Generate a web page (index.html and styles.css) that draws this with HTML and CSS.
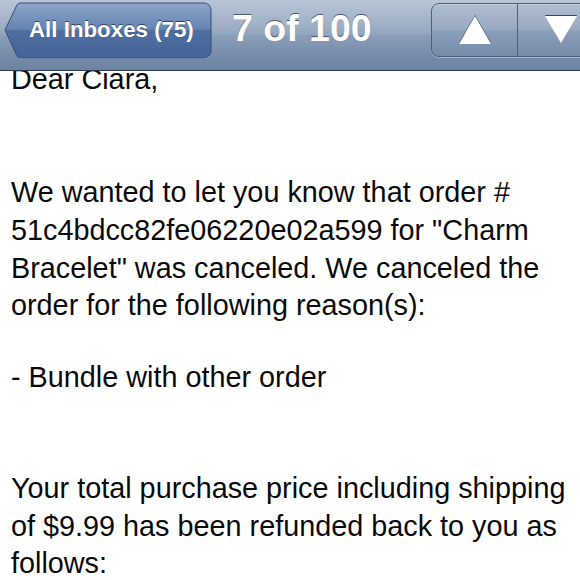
FILE: index.html
```html
<!DOCTYPE html>
<html>
<head>
<meta charset="utf-8">
<link rel="stylesheet" href="styles.css">
</head>
<body>
<header class="navbar">
  <div class="back">
    <svg class="back-shape" width="210" height="58" viewBox="0 0 210 58">
      <defs>
        <linearGradient id="bg" x1="0" y1="0" x2="0" y2="1">
          <stop offset="0" stop-color="#8ea6c9"/>
          <stop offset="0.48" stop-color="#6583b0"/>
          <stop offset="0.5" stop-color="#4f6fa0"/>
          <stop offset="1" stop-color="#44649a"/>
        </linearGradient>
      </defs>
      <path d="M2.5 29.5 L14.5 4 Q15.5 2 18 2 H201 A7 7 0 0 1 208 9 V50 A7 7 0 0 1 201 57 H18 Q15.5 57 14.5 55 Z" fill="#c9d3e0" opacity="0.6"/>
      <path d="M2 28 L14 2.8 Q15 1 17.5 1 H201 A7 7 0 0 1 208 8 V49 A7 7 0 0 1 201 56 H17.5 Q15 56 14 54.2 Z" fill="url(#bg)" stroke="#344d75" stroke-width="1"/>
    </svg>
    <span class="back-label">All Inboxes (75)</span>
  </div>
  <h1 class="title">7 of 100</h1>
  <div class="segments">
    <div class="seg">
      <svg width="34" height="30" viewBox="0 0 34 30"><polygon points="17,1 33,29 1,29" fill="#ffffff"/></svg>
    </div>
    <div class="seg seg-right">
      <svg width="34" height="30" viewBox="0 0 34 30"><polygon points="1,1 33,1 17,28" fill="#ffffff"/></svg>
    </div>
  </div>
</header>
<main class="message">
  <p class="line gap2">Dear Ciara,</p>
  <p class="line gap1">We wanted to let you know that order # 51c4bdcc82fe06220e02a599 for "Charm Bracelet" was canceled. We canceled the order for the following reason(s):</p>
  <p class="line gap3">- Bundle with other order</p>
  <p class="line">Your total purchase price including shipping of $9.99 has been refunded back to you as follows:</p>
</main>
</body>
</html>
```
FILE: styles.css
```css
html, body {
  margin: 0;
  padding: 0;
  background: #ffffff;
  overflow: hidden;
  height: 580px;
}
body {
  width: 580px;
  font-family: "Liberation Sans", Arial, sans-serif;
}
.navbar {
  position: relative;
  z-index: 2;
  height: 70px;
  border-bottom: 1px solid #2c3a4f;
  background: linear-gradient(to bottom, #b8c5d7 0%, #a3b3c8 30%, #93a6bf 49%, #8a9eb9 51%, #7389a8 85%, #6c83a3 100%);
  display: flex;
  align-items: flex-start;
  overflow: hidden;
}
.back {
  position: relative;
  margin-left: 3px;
  margin-top: 2px;
  width: 210px;
  height: 58px;
  flex: none;
}
.back-shape {
  display: block;
}
.back-label {
  position: absolute;
  left: 26px;
  top: 14px;
  color: #ffffff;
  font-weight: bold;
  font-size: 22.3px;
  line-height: 28px;
  text-shadow: 0 -1px 0 rgba(20, 35, 60, 0.7);
  white-space: nowrap;
}
.title {
  margin: 0 0 0 19px;
  padding-top: 6px;
  color: #ffffff;
  font-size: 37.5px;
  font-weight: bold;
  line-height: 44px;
  white-space: nowrap;
  text-shadow: 0 -1px 0 rgba(40, 55, 80, 0.75);
}
.segments {
  margin-left: auto;
  margin-top: 3px;
  margin-right: -24px;
  display: flex;
  flex: none;
  height: 52px;
  border: 1px solid #4c5f7b;
  border-radius: 8px;
  background: linear-gradient(to bottom, #b0bed1 0%, #98aac2 48%, #8a9eb9 52%, #768ca9 100%);
  box-shadow: 0 1px 0 rgba(200, 212, 228, 0.5), inset 0 1px 0 rgba(220, 228, 240, 0.5);
}
.seg {
  width: 85px;
  display: flex;
  align-items: center;
  justify-content: center;
}
.seg svg {
  display: block;
  filter: drop-shadow(0 -1px 0 rgba(30, 45, 70, 0.8));
}
.seg-right {
  border-left: 1px solid #4c5f7b;
}
.message {
  margin-top: -10px;
  padding: 0 2px 0 11px;
  font-size: 28.8px;
  line-height: 37.7px;
  color: #0a0a0a;
}
.line {
  margin: 0;
}
.gap1 {
  margin-bottom: 34px;
}
.gap2 {
  margin-bottom: 75.4px;
}
.gap3 {
  margin-bottom: 73.4px;
}
```
